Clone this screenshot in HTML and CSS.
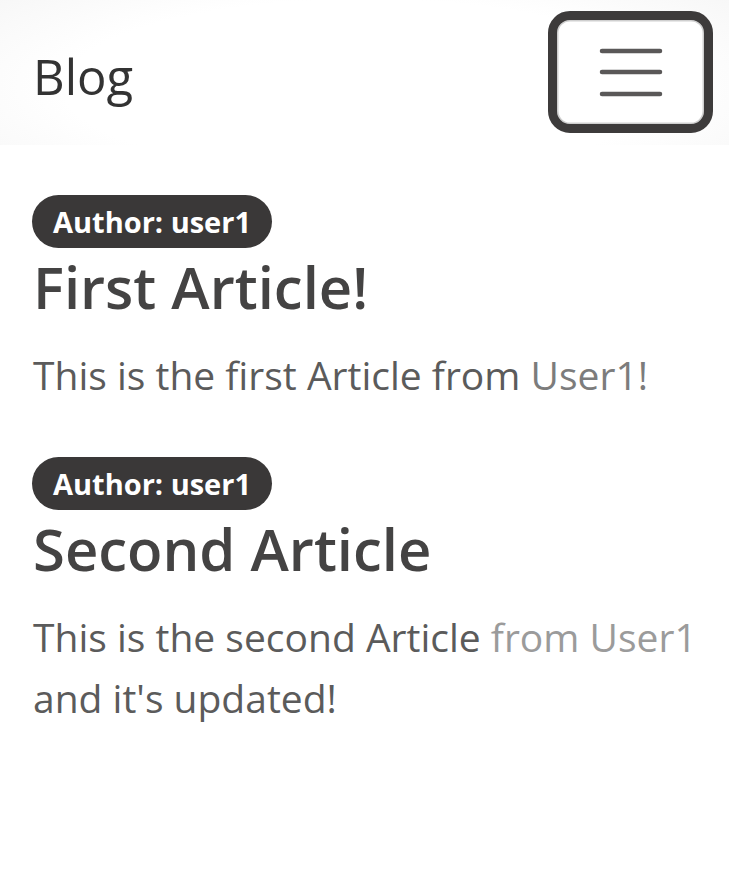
FILE: index.html
```html
<!DOCTYPE html>
<html lang="en">
<head>
<meta charset="utf-8">
<title>Blog</title>
<link rel="stylesheet" href="styles.css">
</head>
<body>
<nav class="navbar">
  <span class="brand">Blog</span>
  <button class="toggler" aria-label="Toggle navigation">
    <svg width="64" height="50" viewBox="0 0 64 50">
      <g stroke="#5a5858" stroke-width="4.5" stroke-linecap="round">
        <line x1="3" y1="4" x2="61" y2="4"/>
        <line x1="3" y1="25" x2="61" y2="25"/>
        <line x1="3" y1="47" x2="61" y2="47"/>
      </g>
    </svg>
  </button>
</nav>
<main class="content">
  <article class="post">
    <span class="badge">Author: user1</span>
    <h2 class="title">First Article!</h2>
    <p class="text">This is the first Article from <span class="faded">User1!</span></p>
  </article>
  <article class="post">
    <span class="badge">Author: user1</span>
    <h2 class="title">Second Article</h2>
    <p class="text">This is the second Article <span class="faded2">from User1</span> and it's updated!</p>
  </article>
</main>
</body>
</html>
```
FILE: styles.css
```css
html, body {
  margin: 0;
  padding: 0;
  background: #ffffff;
}
body {
  font-family: "Open Sans", "Noto Sans", sans-serif;
  color: #444444;
}
.navbar {
  height: 145px;
  box-sizing: border-box;
  display: flex;
  align-items: center;
  justify-content: space-between;
  padding: 0 16px 0 33px;
  background: radial-gradient(ellipse 75% 110% at 50% 60%, #ffffff 55%, #f4f4f4 100%);
}
.brand {
  font-size: 49px;
  color: #333333;
  margin-top: 6px;
}
.toggler {
  width: 165px;
  height: 122px;
  margin-top: -2px;
  box-sizing: border-box;
  border: 9px solid #3d3b3b;
  border-radius: 22px;
  background: #ffffff;
  box-shadow: inset 0 0 0 1.5px #cfcfcf;
  display: flex;
  align-items: center;
  justify-content: center;
  padding: 0;
}
.content {
  padding: 50px 10px 0 33px;
}
.post {
  margin-bottom: 52px;
}
.badge {
  display: inline-block;
  background: #3a3838;
  color: #ffffff;
  font-weight: 700;
  font-size: 29px;
  line-height: 53px;
  height: 53px;
  padding: 0 21px;
  border-radius: 27px;
  margin-left: -1px;
}
.title {
  margin: 0;
  font-size: 58px;
  font-weight: 600;
  line-height: 78px;
  color: #444343;
}
.text {
  margin: 18px 0 0 0;
  font-size: 39px;
  line-height: 61px;
  color: #5b5b5b;
}
.faded {
  color: #7c7c7c;
}
.faded2 {
  color: #9b9b9b;
}
```
